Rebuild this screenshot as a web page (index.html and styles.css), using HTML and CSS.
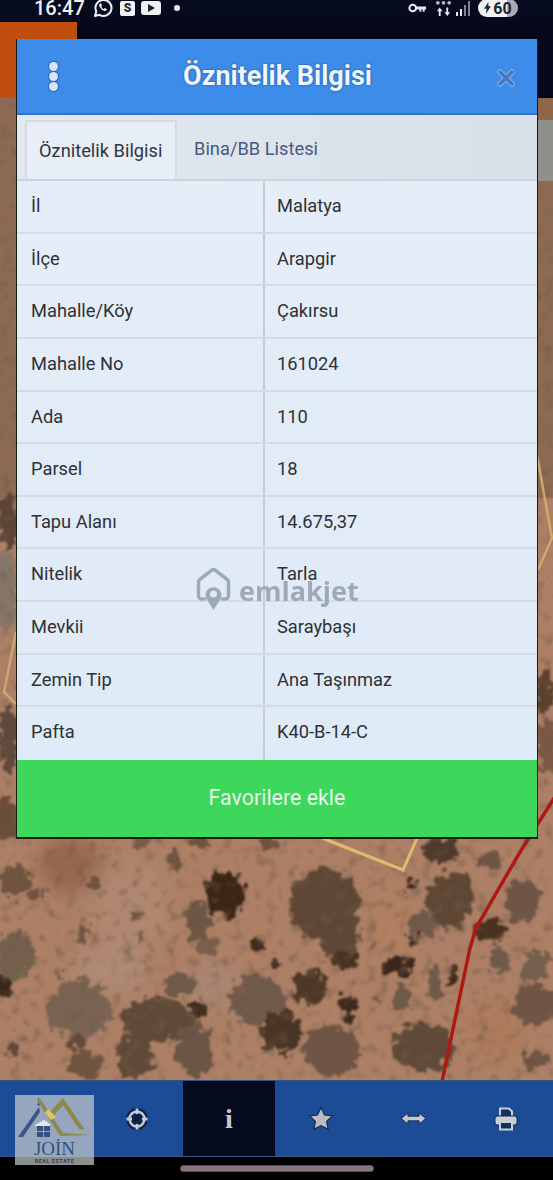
FILE: index.html
```html
<!DOCTYPE html>
<html lang="en">

<head>
    <meta charset="UTF-8">
    <title>Öznitelik Bilgisi</title>
    <link rel="stylesheet" href="styles.css">
</head>

<body>
    <!-- Phone status bar -->
    <div class="status-bar">
        <div class="status-left">
            <span class="clock">16:47</span>
            <svg class="ic-whatsapp" viewBox="0 0 20 20">
                <path d="M2 18l1.300-4.600A8 8 0 1 1 6.400 16.800z" fill="none" stroke="#eef0f4" stroke-width="2" stroke-linejoin="round"/>
                <path d="M7 5.500c-1.500 1-1 3 .8 5s4 3.200 5.500 2l.7-1.200-2.300-1.200-1 .9c-1-.4-2.100-1.500-2.500-2.600l.8-.9-1-2.300z" fill="#eef0f4"/>
            </svg>
            <span class="ic-s">S</span>
            <span class="ic-yt"><i></i></span>
            <span class="ic-dot"></span>
        </div>
        <div class="status-right">
            <svg class="ic-key" viewBox="0 0 20 12">
                <circle cx="5" cy="6" r="3.500" fill="none" stroke="#e6e8ec" stroke-width="2.200"/>
                <path d="M8.500 4.500h10.500v3h-1.500v2.500h-2v-2.500h-1.500v2.500h-2v-2.500h-3.500z" fill="#e6e8ec"/>
            </svg>
            <svg class="ic-data" viewBox="0 0 18 18">
                <circle cx="3" cy="3" r="2" fill="#b4b8be"/><circle cx="9" cy="3" r="2" fill="#b4b8be"/><circle cx="15" cy="3" r="2" fill="#b4b8be"/>
                <path d="M5 8l-3 4h2v5h2v-5h2zM13 17l3-4h-2V8h-2v5h-2z" fill="#e6e8ec"/>
            </svg>
            <span class="signal"><i class="s1"></i><i class="s2"></i><i class="s3"></i><i class="s4"></i></span>
            <span class="battery"><svg viewBox="0 0 8 14"><path d="M5 0L0 8h3l-1 6 6-9H5z" fill="#20242c"/></svg>60</span>
        </div>
    </div>

    <!-- Satellite map with the info dialog on it -->
    <div class="map">
        <svg class="map-bg" viewBox="0 22 553 1058" preserveAspectRatio="none">
            <defs>
                <filter id="rough" x="-5%" y="-5%" width="110%" height="110%">
                    <feTurbulence type="fractalNoise" baseFrequency="0.11" numOctaves="4" seed="4"/>
                    <feDisplacementMap in="SourceGraphic" scale="20" xChannelSelector="R" yChannelSelector="G"/>
                    <feGaussianBlur stdDeviation="1"/>
                </filter>
                <filter id="soft"><feGaussianBlur stdDeviation="10"/></filter>
                <filter id="grain" x="0" y="0" width="100%" height="100%">
                    <feTurbulence type="fractalNoise" baseFrequency="0.09" numOctaves="3" seed="9"/>
                    <feColorMatrix type="matrix" values="0 0 0 0 0.16  0 0 0 0 0.1  0 0 0 0 0.06  1.800 0 0 0 -0.950"/>
                    <feGaussianBlur stdDeviation="1.200"/>
                </filter>
            </defs>
            <rect x="0" y="22" width="553" height="1058" fill="#ad8066"/>
            <rect x="0" y="98" width="553" height="400" fill="#8c6a54"/>

            <!-- reddish and pale ground patches -->
            <g filter="url(#soft)">
                <ellipse cx="130" cy="905" rx="40" ry="45" fill="#b08870"/>
                <ellipse cx="110" cy="970" rx="35" ry="25" fill="#af8a74"/>
                <ellipse cx="390" cy="920" rx="25" ry="40" fill="#b07f60"/>
                <ellipse cx="495" cy="1030" rx="30" ry="35" fill="#ae7a5c"/>
                <ellipse cx="215" cy="985" rx="30" ry="20" fill="#a98672"/>
                <ellipse cx="70" cy="865" rx="32" ry="28" fill="#966650"/>
            </g>

            <!-- trees -->
            <g filter="url(#rough)">
                <ellipse cx="8" cy="520" rx="10" ry="28" fill="#5c4436"/>
                <ellipse cx="6" cy="590" rx="12" ry="40" fill="#85766a"/>
                <ellipse cx="8" cy="740" rx="10" ry="35" fill="#5f4a3c"/>
                <ellipse cx="6" cy="820" rx="14" ry="22" fill="#6b4e3a"/>
                <ellipse cx="545" cy="690" rx="9" ry="22" fill="#5a3f2e"/>
                <ellipse cx="548" cy="745" rx="10" ry="30" fill="#7a5844"/>
                <ellipse cx="15" cy="880" rx="14" ry="18" fill="#6f5240"/>
                <ellipse cx="37" cy="892" rx="8" ry="8" fill="#6f5240"/>
                <ellipse cx="95" cy="885" rx="6" ry="6" fill="#6f5240"/>
                <ellipse cx="175" cy="860" rx="7" ry="8" fill="#6f5240"/>
                <ellipse cx="200" cy="843" rx="11" ry="6" fill="#6f5240"/>
                <ellipse cx="270" cy="843" rx="11" ry="6" fill="#6f5240"/>
                <ellipse cx="140" cy="845" rx="9" ry="6" fill="#7d5c48"/>
                <ellipse cx="197" cy="922" rx="12" ry="20" fill="#6e5644"/>
                <ellipse cx="225" cy="895" rx="20" ry="23" fill="#3a2618"/>
                <ellipse cx="325" cy="905" rx="36" ry="36" fill="#5f4736"/>
                <ellipse cx="340" cy="935" rx="20" ry="26" fill="#5f4736"/>
                <ellipse cx="83" cy="933" rx="7" ry="8" fill="#6f5444"/>
                <ellipse cx="208" cy="947" rx="11" ry="10" fill="#78604e"/>
                <ellipse cx="258" cy="946" rx="6" ry="7" fill="#3f2a1c"/>
                <ellipse cx="275" cy="965" rx="6" ry="5" fill="#4a3224"/>
                <ellipse cx="15" cy="955" rx="20" ry="24" fill="#75604e"/>
                <ellipse cx="2" cy="985" rx="12" ry="11" fill="#3a281c"/>
                <ellipse cx="79" cy="1010" rx="32" ry="29" fill="#7a6452"/>
                <ellipse cx="80" cy="1043" rx="9" ry="9" fill="#624a3a"/>
                <ellipse cx="15" cy="1050" rx="7" ry="7" fill="#624a3a"/>
                <ellipse cx="85" cy="1065" rx="17" ry="13" fill="#705240"/>
                <ellipse cx="158" cy="1020" rx="36" ry="22" fill="#5e4838"/>
                <ellipse cx="135" cy="1055" rx="18" ry="23" fill="#5e4838"/>
                <ellipse cx="195" cy="1050" rx="18" ry="26" fill="#6a5444"/>
                <ellipse cx="180" cy="985" rx="16" ry="11" fill="#705a4a"/>
                <ellipse cx="198" cy="1010" rx="6" ry="10" fill="#3f2a1c"/>
                <ellipse cx="257" cy="1000" rx="28" ry="25" fill="#705a4a"/>
                <ellipse cx="282" cy="1033" rx="20" ry="22" fill="#4a3528"/>
                <ellipse cx="310" cy="987" rx="17" ry="18" fill="#4e3828"/>
                <ellipse cx="349" cy="1008" rx="8" ry="14" fill="#3f2a1c"/>
                <ellipse cx="332" cy="1050" rx="28" ry="25" fill="#6e5444"/>
                <ellipse cx="345" cy="960" rx="12" ry="11" fill="#4a3224"/>
                <ellipse cx="423" cy="1047" rx="30" ry="25" fill="#5e4838"/>
                <ellipse cx="398" cy="967" rx="15" ry="8" fill="#3a281c"/>
                <ellipse cx="435" cy="984" rx="7" ry="20" fill="#705a4a"/>
                <ellipse cx="453" cy="977" rx="6" ry="10" fill="#3f2a1c"/>
                <ellipse cx="402" cy="997" rx="9" ry="14" fill="#705a4a"/>
                <ellipse cx="440" cy="850" rx="19" ry="12" fill="#4f3a2a"/>
                <ellipse cx="450" cy="900" rx="24" ry="28" fill="#5e4634"/>
                <ellipse cx="413" cy="884" rx="7" ry="6" fill="#3a281c"/>
                <ellipse cx="423" cy="925" rx="14" ry="13" fill="#705a4a"/>
                <ellipse cx="412" cy="940" rx="5" ry="5" fill="#3a281c"/>
                <ellipse cx="490" cy="930" rx="16" ry="12" fill="#4a3224"/>
                <ellipse cx="500" cy="960" rx="9" ry="14" fill="#705a4a"/>
                <ellipse cx="522" cy="900" rx="18" ry="22" fill="#6e5444"/>
                <ellipse cx="535" cy="965" rx="13" ry="17" fill="#75604e"/>
                <ellipse cx="535" cy="1005" rx="22" ry="20" fill="#6e5444"/>
                <ellipse cx="490" cy="860" rx="11" ry="9" fill="#6e5444"/>
                <ellipse cx="535" cy="1060" rx="13" ry="9" fill="#6e5444"/>
                <ellipse cx="135" cy="915" rx="4" ry="4" fill="#6f5240"/>
                <ellipse cx="140" cy="940" rx="4" ry="5" fill="#7d5c48"/>
                <ellipse cx="60" cy="975" rx="4" ry="4" fill="#7d5c48"/>
                <ellipse cx="240" cy="990" rx="4" ry="4" fill="#7d5c48"/>
                <ellipse cx="375" cy="945" rx="4" ry="5" fill="#7d5c48"/>
                <ellipse cx="375" cy="1000" rx="4" ry="4" fill="#7d5c48"/>
            </g>

            <!-- soft speckle over ground and trees -->
            <rect x="0" y="98" width="553" height="982" filter="url(#grain)"/>

            <!-- top of the map is not loaded yet -->
            <rect x="0" y="22" width="553" height="76" fill="#04081a"/>
            <rect x="0" y="22" width="77" height="76" fill="#c04f0f"/>
            <rect x="538" y="98" width="15" height="20" fill="#8f6648"/>
            <rect x="538" y="120" width="15" height="61" fill="#8f8f8c"/>

            <polyline points="322,838 403,870 418,836" fill="none" stroke="#dcbd70" stroke-width="3"/>
            <polyline points="16,632 4,692 16,704" fill="none" stroke="#c9a870" stroke-width="2.500"/>
            <polyline points="537,455 552,538 538,570" fill="none" stroke="#cfa868" stroke-width="2.500"/>
            <polyline points="556,795 520,852 476,928 470,948 458,1005 442,1082" fill="none" stroke="#ad1a13" stroke-width="3.500"/>
        </svg>

        <div class="dialog">
            <div class="dialog-head">
                <span class="kebab"><i></i><i></i><i></i></span>
                <h1>Öznitelik Bilgisi</h1>
                <svg class="close" viewBox="0 0 18 18">
                    <path d="M3 3l12 12M15 3L3 15" stroke="#7fb2ec" stroke-width="5.500" stroke-linecap="round"/>
                    <path d="M3 3l12 12M15 3L3 15" stroke="#4578bd" stroke-width="3.500" stroke-linecap="round"/>
                </svg>
            </div>

            <div class="tabs">
                <div class="tab active">Öznitelik Bilgisi</div>
                <div class="tab">Bina/BB Listesi</div>
            </div>

            <div class="rows">
                <div class="row"><span>İl</span><span>Malatya</span></div>
                <div class="row"><span>İlçe</span><span>Arapgir</span></div>
                <div class="row"><span>Mahalle/Köy</span><span>Çakırsu</span></div>
                <div class="row"><span>Mahalle No</span><span>161024</span></div>
                <div class="row"><span>Ada</span><span>110</span></div>
                <div class="row"><span>Parsel</span><span>18</span></div>
                <div class="row"><span>Tapu Alanı</span><span>14.675,37</span></div>
                <div class="row"><span>Nitelik</span><span>Tarla</span></div>
                <div class="row"><span>Mevkii</span><span>Saraybaşı</span></div>
                <div class="row"><span>Zemin Tip</span><span>Ana Taşınmaz</span></div>
                <div class="row"><span>Pafta</span><span>K40-B-14-C</span></div>
            </div>

            <div class="fav-btn">Favorilere ekle</div>

            <!-- Watermark over the table -->
            <div class="watermark">
                <svg viewBox="0 0 36 44">
                    <path d="M9 32H6a3 3 0 0 1-3-3V15a3 3 0 0 1 1.300-2.500L16 3.500a3 3 0 0 1 4 0l11.700 9a3 3 0 0 1 1.300 2.500v14a3 3 0 0 1-3 3h-3" fill="none" stroke="#9ba8b3" stroke-width="3.500" stroke-linecap="round"/>
                    <path d="M18 43l-7-11a8 8 0 1 1 14 0z" fill="#9ba8b3"/>
                    <circle cx="18" cy="27" r="3.500" fill="#dfe8f3"/>
                </svg>
                <span>emlakjet</span>
            </div>
        </div>
    </div>

    <!-- Bottom toolbar -->
    <div class="toolbar">
        <div class="tool"></div>
        <div class="tool">
            <svg viewBox="0 0 24 24" width="24" height="24">
                <circle cx="12" cy="12" r="11" fill="#10264e"/>
                <circle cx="12" cy="12" r="7.500" fill="none" stroke="#c9ced6" stroke-width="2.400"/>
                <path d="M12 1.500v5.500M12 17v5.500M1.500 12h5.500M17 12h5.500" stroke="#c9ced6" stroke-width="2.800"/>
                <path d="M9.500 9.500l5 5M14.500 9.500l-5 5" stroke="#0c1c3a" stroke-width="2.400"/>
            </svg>
        </div>
        <div class="tool active"><span class="info">i</span></div>
        <div class="tool">
            <svg viewBox="0 0 24 24" width="26" height="26">
                <path d="M12 1.500l3.200 6.800 7.300.9-5.400 5 1.500 7.300L12 18l-6.600 3.500 1.500-7.300-5.400-5 7.300-.9z" fill="#b9bbc0" stroke="#10264e" stroke-width="1"/>
            </svg>
        </div>
        <div class="tool">
            <svg viewBox="0 0 28 16" width="27" height="15">
                <path d="M1 8l7-6v3.500h12V2l7 6-7 6v-3.500H8V14z" fill="#c4c8ce" stroke="#10264e" stroke-width="1"/>
            </svg>
        </div>
        <div class="tool">
            <svg viewBox="0 0 26 26" width="26" height="26">
                <path d="M7 10V2.500h9l3 3V10" fill="#14305e" stroke="#c9ced6" stroke-width="2"/>
                <rect x="2" y="10" width="22" height="9" rx="2.500" fill="#c9ced6" stroke="#10264e"/>
                <rect x="7" y="16" width="12" height="7.500" fill="#14305e" stroke="#c9ced6" stroke-width="2"/>
            </svg>
        </div>
    </div>

    <!-- Gesture bar -->
    <div class="gesture-area"><span class="gesture-bar"></span></div>

    <!-- Real estate logo stamped over the toolbar -->
    <div class="logo">
        <svg viewBox="0 0 79 44" width="79" height="44">
            <path d="M3 42L24 12l1 5L8 42z" fill="#3d5488"/>
            <path d="M22 10l2-4 1 5z" fill="#3d5488"/>
            <path d="M24 2l24 36 30 2-33 1L22 5z" fill="#8c8a4a"/>
            <path d="M33 19L48 3l22 32-6-1L48 10 36 24z" fill="#8c8a4a"/>
            <path d="M33 14l8 8-5 3-6-7z" fill="#d8c868"/>
            <path d="M20 30l9-5 6 4v2H20z" fill="#e4e6ea"/>
            <rect x="22" y="31" width="6" height="5" fill="#34507f"/><rect x="29" y="31" width="6" height="5" fill="#34507f"/>
            <rect x="22" y="37" width="6" height="5" fill="#34507f"/><rect x="29" y="37" width="6" height="5" fill="#34507f"/>
        </svg>
        <div class="logo-name">JOİN</div>
        <div class="logo-sub">REAL ESTATE</div>
    </div>
</body>

</html>
```

FILE: styles.css
```css
/* Basic styling */
html,
body {
    margin: 0;
    padding: 0;
}

body {
    display: flex;
    flex-direction: column;
    position: relative;
    height: 1180px;
    overflow: hidden;
    font-family: Roboto, Arial, sans-serif;
    background-color: black;
}

/* Status bar */
.status-bar {
    display: flex;
    justify-content: space-between;
    align-items: flex-start;
    height: 22px;
    padding: 0 35px 0 34px;
    overflow: hidden;
    background: #050a1e;
    color: #eef0f4;
}

.status-left,
.status-right {
    display: flex;
    align-items: center;
    height: 16px;
}

.clock {
    font-size: 20px;
    font-weight: 500;
    line-height: 16px;
    width: 59px;
}

.ic-whatsapp {
    width: 20px;
    height: 20px;
    margin-right: 7px;
}

.ic-s {
    width: 15px;
    height: 15px;
    margin-right: 6px;
    border-radius: 2px;
    background: #eef0f4;
    color: #20242c;
    font-size: 12px;
    font-weight: 900;
    line-height: 15px;
    text-align: center;
}

.ic-yt {
    display: flex;
    align-items: center;
    justify-content: center;
    width: 20px;
    height: 14px;
    margin-right: 13px;
    border-radius: 3px;
    background: #eef0f4;
}

.ic-yt i {
    border-left: 7px solid #20242c;
    border-top: 4px solid transparent;
    border-bottom: 4px solid transparent;
}

.ic-dot {
    width: 6px;
    height: 6px;
    border-radius: 50%;
    background: #eef0f4;
}

.ic-key {
    width: 19px;
    height: 12px;
    margin-right: 8px;
}

.ic-data {
    width: 17px;
    height: 17px;
    margin-right: 4px;
}

.signal {
    display: flex;
    align-items: flex-end;
    gap: 2px;
    height: 15px;
    margin-right: 8px;
}

.signal i {
    width: 2px;
    background: #e6e8ec;
}

.signal .s1 { height: 4px; }
.signal .s2 { height: 7px; }
.signal .s3 { height: 11px; background: #80848c; }
.signal .s4 { height: 15px; background: #80848c; }

.battery {
    display: flex;
    align-items: center;
    justify-content: center;
    gap: 2px;
    width: 40px;
    height: 18px;
    border-radius: 9px;
    background: linear-gradient(90deg, #f0f1f3 72%, #a9acb2 72%);
    color: #20242c;
    font-size: 16px;
    font-weight: 700;
}

.battery svg {
    width: 7px;
    height: 12px;
}

/* Map area */
.map {
    position: relative;
    height: 1058px;
    flex-shrink: 0;
}

.map-bg {
    position: absolute;
    top: 0;
    left: 0;
    width: 100%;
    height: 100%;
}

/* Info dialog */
.dialog {
    position: relative;
    box-sizing: border-box;
    width: 522px;
    height: 800px;
    margin: 17px 0 0 16px;
    border: 1px solid #1c1c12;
    border-top: none;
    border-bottom-width: 2px;
    background: linear-gradient(180deg, #e6eef8, #deeaf7);
    overflow: hidden;
}

.dialog-head {
    display: flex;
    align-items: center;
    justify-content: space-between;
    box-sizing: border-box;
    height: 76px;
    padding: 0 22px 0 32px;
    background: #3d8ce9;
    border-bottom: 2px solid #3273c8;
}

.dialog-head h1 {
    margin: 0;
    color: #eef6ff;
    font-size: 27px;
    font-weight: 700;
    text-shadow: 0 0 2px #17427f;
}

.kebab {
    display: flex;
    flex-direction: column;
    gap: 1px;
}

.kebab i {
    width: 9px;
    height: 9px;
    border-radius: 50%;
    background: #d5e6f8;
    box-shadow: 0 0 0 1px #2c66b4;
}

.close {
    width: 18px;
    height: 18px;
    margin-top: 3px;
}

.tabs {
    display: flex;
    align-items: flex-end;
    box-sizing: border-box;
    height: 66px;
    padding-left: 8px;
    background: linear-gradient(90deg, #e2e8f0, #d8e0e9);
    border-bottom: 2px solid #cdd3d9;
}

.tab {
    box-sizing: border-box;
    height: 59px;
    padding: 0 17px;
    color: #475a82;
    font-size: 18.300px;
    line-height: 57px;
}

.tab.active {
    width: 152px;
    padding: 0 0 0 12px;
    border: 2px solid #d5dae0;
    border-bottom: none;
    background: #e8eef7;
    color: #333340;
    white-space: nowrap;
}

.rows {
    display: grid;
    grid-auto-rows: 1fr;
    height: 579px;
}

.row {
    display: grid;
    grid-template-columns: 248px 1fr;
    border-bottom: 2px solid #d6dbe1;
    color: #2f3136;
    font-size: 18.300px;
    line-height: 50px;
}

.row:last-child {
    border-bottom: none;
}

.row span:first-child {
    padding-left: 14px;
    border-right: 2px solid #c6ccd3;
}

.row span:last-child {
    padding-left: 12px;
}

.fav-btn {
    height: 77px;
    background: #3dd75c;
    color: #e8f6e8;
    font-size: 21.400px;
    line-height: 75px;
    text-align: center;
}

/* Watermark */
.watermark {
    position: absolute;
    left: 178px;
    top: 528px;
    display: flex;
    align-items: center;
    gap: 7px;
    color: #9ba8b3;
    font-family: "Open Sans", Arial, sans-serif;
    font-size: 27px;
    font-weight: 700;
    opacity: 0.95;
}

.watermark svg {
    width: 37px;
    height: 44px;
}

.watermark span {
    margin-top: 3px;
}

/* Bottom toolbar */
.toolbar {
    display: grid;
    grid-template-columns: 91px 92px 92px 92px 92px 94px;
    box-sizing: border-box;
    height: 77px;
    flex-shrink: 0;
    background: #1d4c97;
    border-top: 1px solid #33557f;
    border-bottom: 1px solid #33557f;
}

.tool {
    display: flex;
    align-items: center;
    justify-content: center;
}

.tool.active {
    background: #050a1e;
}

.info {
    color: #c6c8cc;
    font-family: "Liberation Serif", serif;
    font-size: 28px;
    font-weight: 700;
}

.gesture-area {
    display: flex;
    justify-content: center;
    flex: 1;
    padding-top: 9px;
    background: #000;
}

.gesture-bar {
    width: 192px;
    height: 5px;
    border-radius: 3px;
    background: #8a7482;
    box-shadow: 0 0 0 1px #55505a;
}

/* Logo stamp */
.logo {
    position: absolute;
    left: 15px;
    top: 1095px;
    display: flex;
    flex-direction: column;
    align-items: center;
    width: 79px;
    height: 70px;
    background: rgba(208, 210, 210, 0.68);
    overflow: hidden;
}

.logo svg {
    flex-shrink: 0;
}

.logo-name {
    margin-top: 2px;
    color: #34507f;
    font-family: "Liberation Serif", serif;
    font-size: 19px;
    line-height: 16px;
}

.logo-sub {
    margin-top: 1px;
    color: #34405c;
    font-size: 5.500px;
    font-weight: 700;
    letter-spacing: 0.5px;
    line-height: 7px;
}
```
